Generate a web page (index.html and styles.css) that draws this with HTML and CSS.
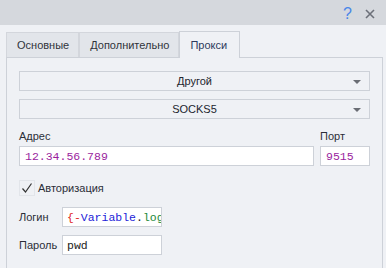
FILE: index.html
```html
<!DOCTYPE html>
<html lang="ru">

<head>
    <meta charset="UTF-8">
    <title>Прокси</title>
    <link rel="stylesheet" href="styles.css">
</head>

<body>
    <div class="titlebar">
        <span class="help">?</span>
        <svg class="close" width="10" height="10" viewBox="0 0 10 10">
            <path d="M1 1 L9 9 M9 1 L1 9" stroke="#6c7079" stroke-width="1.6" />
        </svg>
    </div>

    <div class="tabs">
        <div class="tab">Основные</div>
        <div class="tab">Дополнительно</div>
        <div class="tab active">Прокси</div>
    </div>

    <div class="panel">
        <div class="select">
            <span>Другой</span>
            <span class="arrow"></span>
        </div>
        <div class="select">
            <span>SOCKS5</span>
            <span class="arrow"></span>
        </div>

        <div class="address-row">
            <div class="field grow">
                <label>Адрес</label>
                <div class="input mono purple">12.34.56.789</div>
            </div>
            <div class="field port">
                <label>Порт</label>
                <div class="input mono purple">9515</div>
            </div>
        </div>

        <div class="check-row">
            <span class="checkbox">
                <svg width="12" height="12" viewBox="0 0 12 12">
                    <path d="M1.5 6.5 L4.5 10 L10.5 1.5" fill="none" stroke="#333" stroke-width="1.2" />
                </svg>
            </span>
            <span>Авторизация</span>
        </div>

        <div class="auth">
            <div class="auth-row">
                <label>Логин</label>
                <div class="input small mono"><span class="red">{-</span><span class="blue">Variable</span><span>.</span><span class="green">login</span><span class="red">-}</span></div>
            </div>
            <div class="auth-row">
                <label>Пароль</label>
                <div class="input small mono">pwd</div>
            </div>
        </div>
    </div>
</body>

</html>
```

FILE: styles.css
```css
body {
    margin: 0;
    width: 386px;
    height: 268px;
    overflow: hidden;
    display: flex;
    flex-direction: column;
    background-color: #eff1f5;
    font-family: 'Liberation Sans', Arial, sans-serif;
    font-size: 11px;
    color: #2b2e38;
}

.titlebar {
    flex: none;
    height: 25px;
    background-color: #d5d8dd;
    display: flex;
    align-items: center;
    justify-content: flex-end;
    padding-right: 11px;
    gap: 13px;
}

.help {
    color: #4a86e8;
    font-size: 16px;
    line-height: 16px;
    margin-top: 3px;
}

.close {
    margin-top: 3px;
}

.tabs {
    flex: none;
    display: flex;
    align-items: flex-end;
    padding-left: 6px;
    margin-top: 6px;
    height: 26px;
}

.tab {
    height: 25px;
    box-sizing: border-box;
    padding: 0 9px 0 10px;
    display: flex;
    align-items: center;
    background-color: #e2e5ea;
    border: 1px solid #d3d6dc;
    border-bottom: none;
    color: #30333b;
}

.tab.active {
    height: 27px;
    margin-bottom: -1px;
    background-color: #eff1f5;
    border-color: #cdd1d8;
    color: #2d3a5c;
    padding: 0 12px 0 10px;
    position: relative;
    z-index: 1;
}

.panel {
    flex: 1;
    margin: 0 3px 0 6px;
    border: 1px solid #cdd1d8;
    border-bottom: none;
    padding: 13px 12px 0 12px;
    overflow: hidden;
}

.select {
    height: 20px;
    box-sizing: border-box;
    border: 1px solid #cdd1d8;
    display: flex;
    align-items: center;
    justify-content: center;
    position: relative;
    margin-bottom: 8px;
    color: #22252d;
}

.arrow {
    position: absolute;
    right: 8px;
    top: 8px;
    border-left: 4px solid transparent;
    border-right: 4px solid transparent;
    border-top: 4px solid #6a6d74;
}

.address-row {
    display: flex;
    gap: 6px;
    margin-top: 2px;
}

.field {
    display: flex;
    flex-direction: column;
    gap: 2px;
}

.field label {
    height: 17px;
    line-height: 19px;
}

.grow {
    flex: 1;
}

.port {
    width: 50px;
}

.input {
    height: 20px;
    box-sizing: border-box;
    border: 1px solid #cdd1d8;
    background-color: #fff;
    padding-left: 5px;
    line-height: 19px;
    white-space: nowrap;
    overflow: hidden;
}

.mono {
    font-family: 'Liberation Mono', 'Courier New', monospace;
    font-size: 11.5px;
    color: #222;
}

.purple {
    color: #9a1d9e;
}

.red {
    color: #e02424;
}

.blue {
    color: #2323d8;
}

.green {
    color: #1e8a3a;
}

.check-row {
    display: flex;
    align-items: center;
    gap: 3px;
    margin-top: 13px;
    height: 17px;
}

.checkbox {
    width: 16px;
    height: 16px;
    box-sizing: border-box;
    border: 1px solid #e2e5ea;
    display: flex;
    align-items: center;
    justify-content: center;
}

.auth {
    margin-top: 11px;
    display: flex;
    flex-direction: column;
    gap: 8px;
}

.auth-row {
    display: flex;
    align-items: center;
}

.auth-row label {
    width: 43px;
}

.small {
    width: 100px;
    padding-left: 4px;
}
```
